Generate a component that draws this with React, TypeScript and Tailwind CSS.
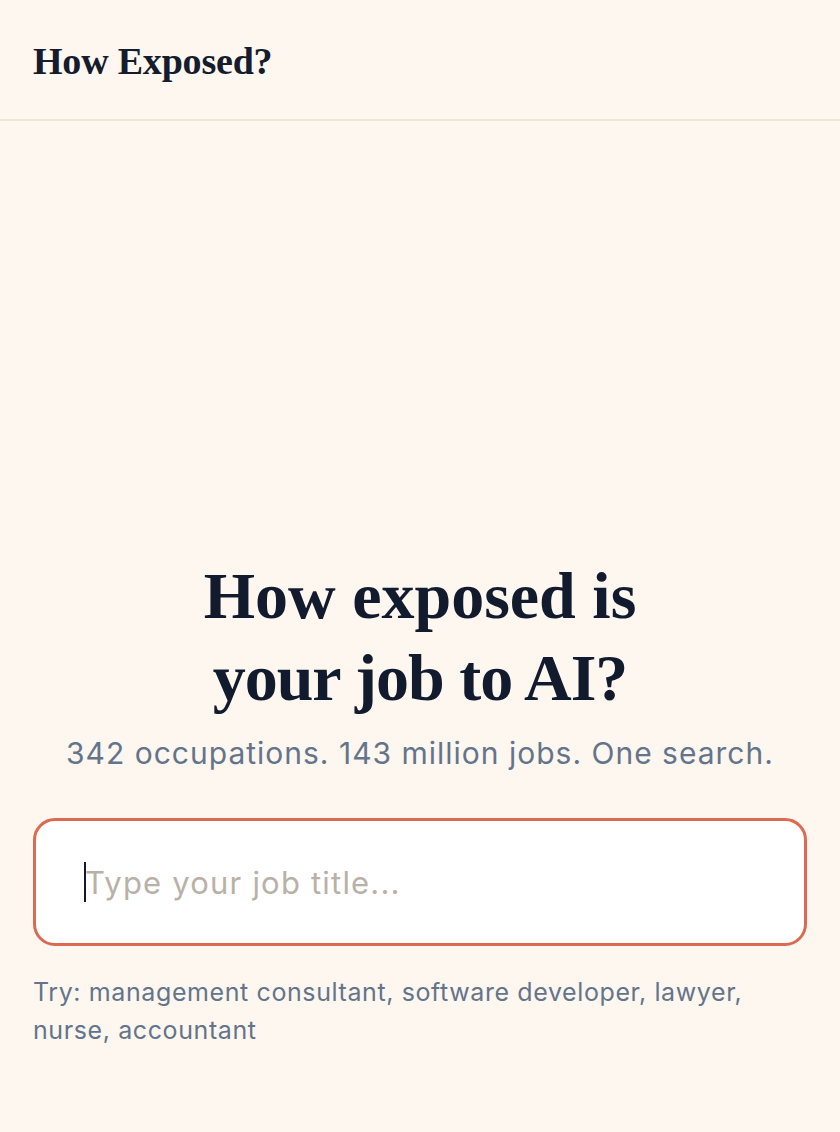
import { useState } from "react";

const serif = "font-['Liberation_Serif','DejaVu_Serif',serif]";
const sans = "font-['Inter','Liberation_Sans',sans-serif]";

function Header() {
  return (
    <header className="h-[121px] border-b-2 border-[#efe5d9] px-[33px] pt-[3px] flex items-center">
      <span className={`${serif} text-[38px] font-bold text-[#141c2d] tracking-[-0.2px]`}>How Exposed?</span>
    </header>
  );
}

function SearchBox() {
  const [query, setQuery] = useState("");

  return (
    <div className="relative mt-[45px]">
      <input
        autoFocus
        value={query}
        onChange={(e) => setQuery(e.target.value)}
        placeholder="Type your job title..."
        className="w-full h-[128px] rounded-[22px] border-[3px] border-[#dc6a51] bg-white pl-[49px] pr-6 text-[31px] tracking-[1.2px] text-[#121b2d] caret-[#121b2d] placeholder:text-[#b9b1a7] outline-none"
      />
      {query === "" && (
        <span className="pointer-events-none absolute left-[51px] top-[44px] h-[40px] w-[2px] bg-[#121b2d]" />
      )}
    </div>
  );
}

export default function App() {
  return (
    <div className={`min-h-screen bg-[#fef7f0] ${sans}`}>
      <Header />
      <main className="px-[33px] pt-[434px] pb-16">
        <h1 className={`${serif} text-center text-[66px] leading-[82px] font-bold text-[#121b2d]`}>
          How exposed is
          <br />
          <span className="tracking-[-1px]">your job to AI?</span>
        </h1>
        <p className="mt-[14px] text-center text-[30px] leading-[40px] tracking-[1px] text-[#64748b]">
          342 occupations. 143 million jobs. One search.
        </p>
        <SearchBox />
        <p className="mt-[27px] text-[25px] leading-[38px] tracking-[0.6px] text-[#64748b]">
          Try: management consultant, software developer, lawyer, nurse, accountant
        </p>
      </main>
    </div>
  );
}
